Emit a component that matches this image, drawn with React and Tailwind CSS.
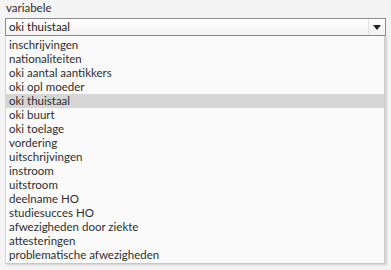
import { useState } from 'react';

const options = [
  'inschrijvingen',
  'nationaliteiten',
  'oki aantal aantikkers',
  'oki opl moeder',
  'oki thuistaal',
  'oki buurt',
  'oki toelage',
  'vordering',
  'uitschrijvingen',
  'instroom',
  'uitstroom',
  'deelname HO',
  'studiesucces HO',
  'afwezigheden door ziekte',
  'attesteringen',
  'problematische afwezigheden',
];

export default function App() {
  const [selected, setSelected] = useState('oki thuistaal');

  return (
    <div className="w-[391px] h-[270px] bg-[#f4f4f4] px-[5px] pt-[1px] text-[11.5px] text-[#2e2e2e] overflow-hidden" style={{ fontFamily: 'Lato, "Noto Sans", sans-serif' }}>
      <div className="h-[17px] leading-[14px] pl-[1px]">variabele</div>
      {/* select box */}
      <div className="w-[381px] h-[18px] border border-[#8c8c8c] bg-gradient-to-b from-white to-[#f3f3f3] flex items-stretch">
        <div className="flex-1 pl-[3px] leading-[16px] text-[#222]">{selected}</div>
        <div className="w-[17px] border-l border-[#e2e2e2] flex items-center justify-center">
          <svg width="8" height="5" viewBox="0 0 8 5">
            <path d="M0 0 H8 L4 5 Z" fill="#222" />
          </svg>
        </div>
      </div>
      {/* dropdown list */}
      <div className="w-[381px] bg-[#fafafa] border-l border-[#d6d6d6] border-b border-r-2 border-b-[#c8c8c8] border-r-[#cfcfcf] shadow-[1px_1px_2px_rgba(0,0,0,0.15)] pt-[2px] pb-[1px]">
        {options.map((o) => (
          <div
            key={o}
            onClick={() => setSelected(o)}
            className={`h-[14px] leading-[14px] pl-[3px] whitespace-nowrap ${o === selected ? 'bg-[#d6d6d6]' : ''}`}
          >
            {o}
          </div>
        ))}
      </div>
    </div>
  );
}
